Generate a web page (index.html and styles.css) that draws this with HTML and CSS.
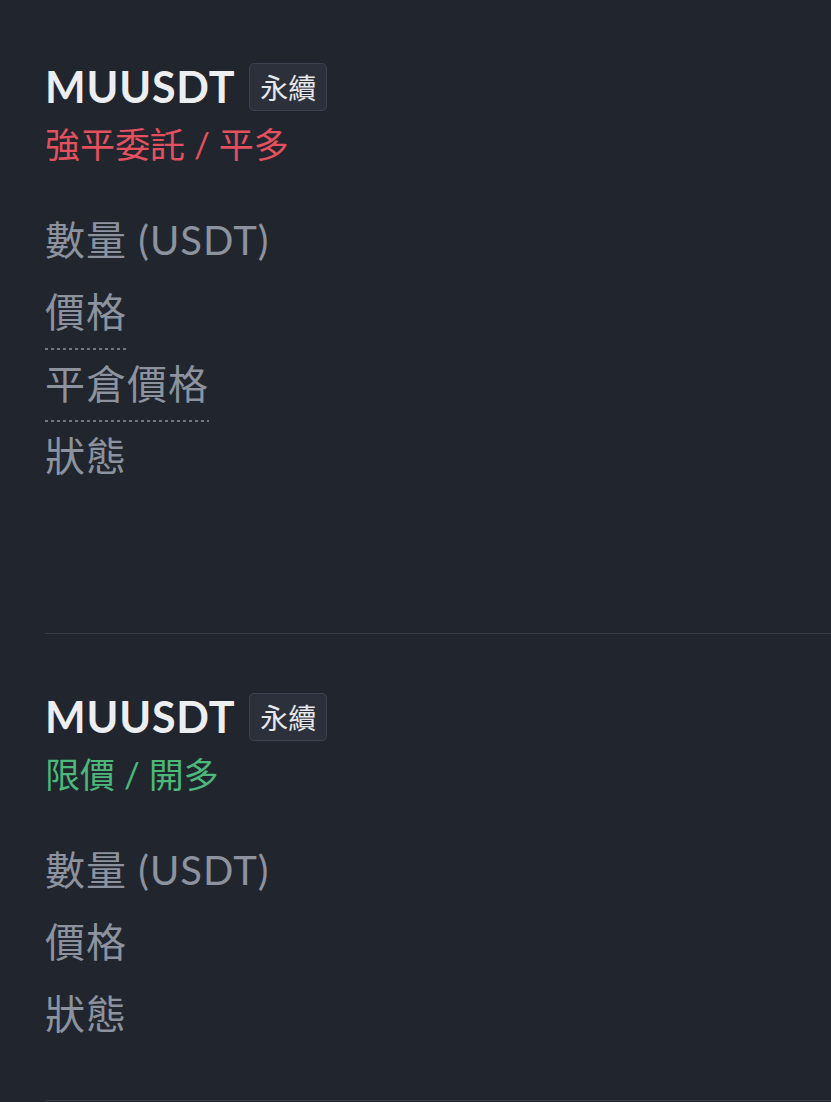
FILE: index.html
```html
<!DOCTYPE html>
<html lang="zh-Hant">
<head>
    <meta charset="UTF-8">
    <meta name="viewport" content="width=device-width, initial-scale=1.0">
    <title>委託</title>
    <link rel="stylesheet" href="styles.css">
</head>
<body>

    <div class="orders">
        <div class="order order-tall">
            <div class="order-head">
                <span class="symbol">MUUSDT</span>
                <span class="badge">永續</span>
            </div>
            <div class="order-type sell">強平委託 / 平多</div>

            <div class="fields">
                <div class="field"><span class="label">數量 (USDT)</span></div>
                <div class="field"><span class="label dotted">價格</span></div>
                <div class="field"><span class="label dotted">平倉價格</span></div>
                <div class="field"><span class="label">狀態</span></div>
            </div>
        </div>

        <div class="order">
            <div class="order-head">
                <span class="symbol">MUUSDT</span>
                <span class="badge">永續</span>
            </div>
            <div class="order-type buy">限價 / 開多</div>

            <div class="fields">
                <div class="field"><span class="label">數量 (USDT)</span></div>
                <div class="field"><span class="label">價格</span></div>
                <div class="field"><span class="label">狀態</span></div>
            </div>
        </div>
    </div>

</body>
</html>
```

FILE: styles.css
```css
/* General styles */
body {
    font-family: Lato, "Noto Sans CJK TC", sans-serif;
    background-color: #21252e;
    color: #eceef1;
    margin: 0;
    padding: 0 0 0 45px;
}

.orders {
    padding-top: 4px;
}

.order {
    padding: 59px 0 48px;
    border-bottom: 1px solid #363b47;
}

.order-tall {
    padding-bottom: 139px;
}

.order-head {
    display: flex;
    align-items: center;
    gap: 14px;
    height: 48px;
}

.symbol {
    font-size: 43px;
    font-weight: 700;
    line-height: 48px;
    letter-spacing: 0.8px;
    color: #eceef1;
}

.badge {
    box-sizing: border-box;
    height: 48px;
    padding: 0 10px;
    font-family: "Noto Sans CJK TC", sans-serif;
    font-size: 28px;
    line-height: 46px;
    color: #e6e8ec;
    background-color: #2b303b;
    border: 1px solid #3c4250;
    border-radius: 5px;
}

.order-type {
    margin-top: 11px;
    font-size: 35px;
    line-height: 44px;
}

.order-type.sell {
    color: #e4505e;
}

.order-type.buy {
    color: #4cb87a;
}

/* Field labels */
.fields {
    margin-top: 50px;
    display: flex;
    flex-direction: column;
    align-items: flex-start;
    gap: 10px;
}

.field {
    height: 62px;
}

.label {
    display: inline-block;
    font-size: 40px;
    line-height: 48px;
    letter-spacing: 1px;
    padding-bottom: 14px;
    color: #8c929e;
}

.label.dotted {
    background-image: linear-gradient(to right, #6f7684 50%, transparent 50%);
    background-size: 6px 2px;
    background-repeat: repeat-x;
    background-position: left bottom;
}
```
